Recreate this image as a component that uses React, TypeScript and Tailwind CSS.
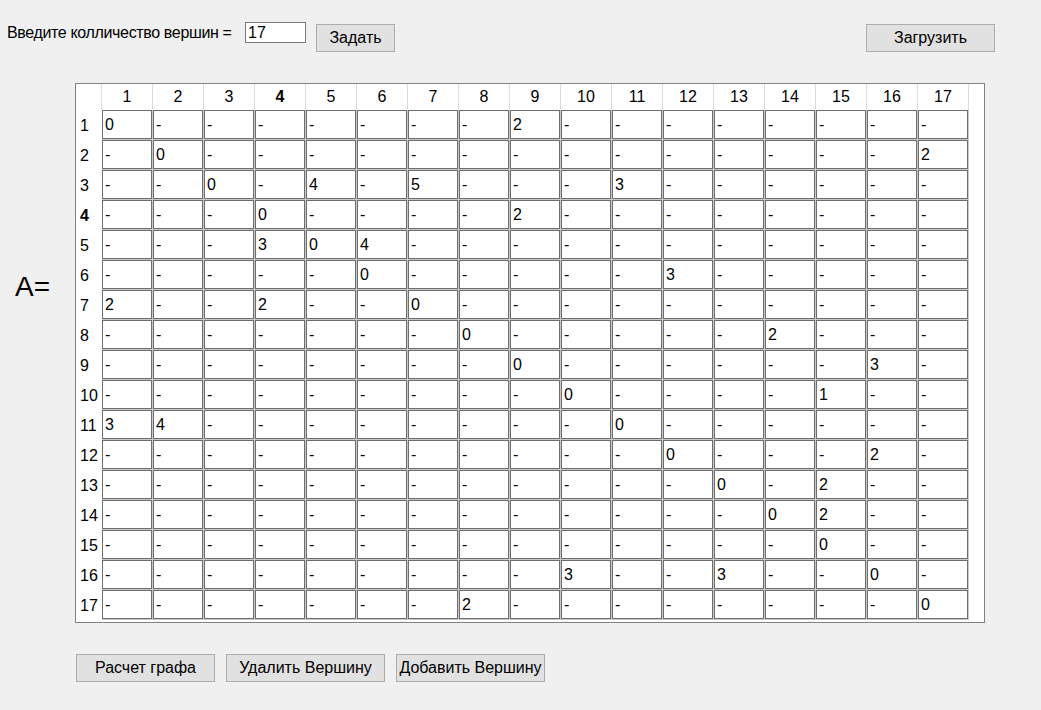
import React from 'react';

const N = 17;

// non-dash values of the adjacency matrix, [row, col, value], 1-based
const values: [number, number, number][] = [
  [1, 9, 2],
  [2, 17, 2],
  [3, 5, 4], [3, 7, 5], [3, 11, 3],
  [4, 9, 2],
  [5, 4, 3], [5, 6, 4],
  [6, 12, 3],
  [7, 1, 2], [7, 4, 2],
  [8, 14, 2],
  [9, 16, 3],
  [10, 15, 1],
  [11, 1, 3], [11, 2, 4],
  [12, 16, 2],
  [13, 15, 2],
  [14, 15, 2],
  [16, 10, 3], [16, 13, 3],
  [17, 8, 2],
];

function cellValue(r: number, c: number): string {
  if (r === c) return '0';
  const hit = values.find((v) => v[0] === r && v[1] === c);
  return hit ? String(hit[2]) : '-';
}

const range = Array.from({ length: N }, (_, i) => i + 1);

function Button({ label, className }: { label: string; className: string }) {
  return (
    <button
      type="button"
      className={`h-[28px] border border-[#adadad] bg-[#e1e1e1] text-[16px] leading-[18px] text-black ${className}`}
    >
      {label}
    </button>
  );
}

function MatrixGrid() {
  return (
    <div className="w-[910px] h-[540px] border border-[#828282] bg-white">
      {/* column headers */}
      <div className="flex h-[26px]">
        <div className="w-[26px] border-r border-[#dcdcdc]" />
        {range.map((c) => (
          <div
            key={c}
            className={`w-[51px] border-r border-[#dcdcdc] flex items-center justify-center ${c === 4 ? 'font-bold' : ''}`}
          >
            {c}
          </div>
        ))}
      </div>
      {/* rows */}
      {range.map((r) => (
        <div key={r} className="flex h-[30px]">
          <div className={`w-[26px] pl-[4px] pt-[2px] flex items-center ${r === 4 ? 'font-bold' : ''}`}>{r}</div>
          {range.map((c) => (
            <div key={c} className="w-[51px] h-[30px] pr-px pb-px bg-[#c8c8c8]">
              <div className="h-full border border-[#6e6e6e] bg-white pl-[2px] flex items-center">
                {cellValue(r, c)}
              </div>
            </div>
          ))}
        </div>
      ))}
    </div>
  );
}

export default function App() {
  return (
    <div className="w-[1041px] h-[710px] bg-[#f0f0f0] text-black text-[16px] leading-[18px] font-['Liberation_Sans',Arial,sans-serif] overflow-hidden">
      <div className="flex items-start pt-[22px] h-[52px]">
        <div className="w-[238px] ml-[7px] mt-[2px] whitespace-nowrap tracking-[-0.35px]">Введите колличество вершин =</div>
        <input
          defaultValue="17"
          className="w-[61px] h-[21px] border border-[#7a7a7a] bg-white pl-[2px] outline-none text-[16px]"
        />
        <Button label="Задать" className="w-[79px] ml-[10px] mt-[2px]" />
        <Button label="Загрузить" className="w-[129px] ml-auto mr-[46px] mt-[2px]" />
      </div>

      <div className="flex mt-[31px]">
        <div className="w-[75px] pl-[15px] pt-[188px] text-[28px] leading-[32px]">A=</div>
        <MatrixGrid />
      </div>

      <div className="flex mt-[31px] ml-[76px] gap-[11px]">
        <Button label="Расчет графа" className="w-[139px]" />
        <Button label="Удалить Вершину" className="w-[159px]" />
        <Button label="Добавить Вершину" className="w-[149px]" />
      </div>
    </div>
  );
}
